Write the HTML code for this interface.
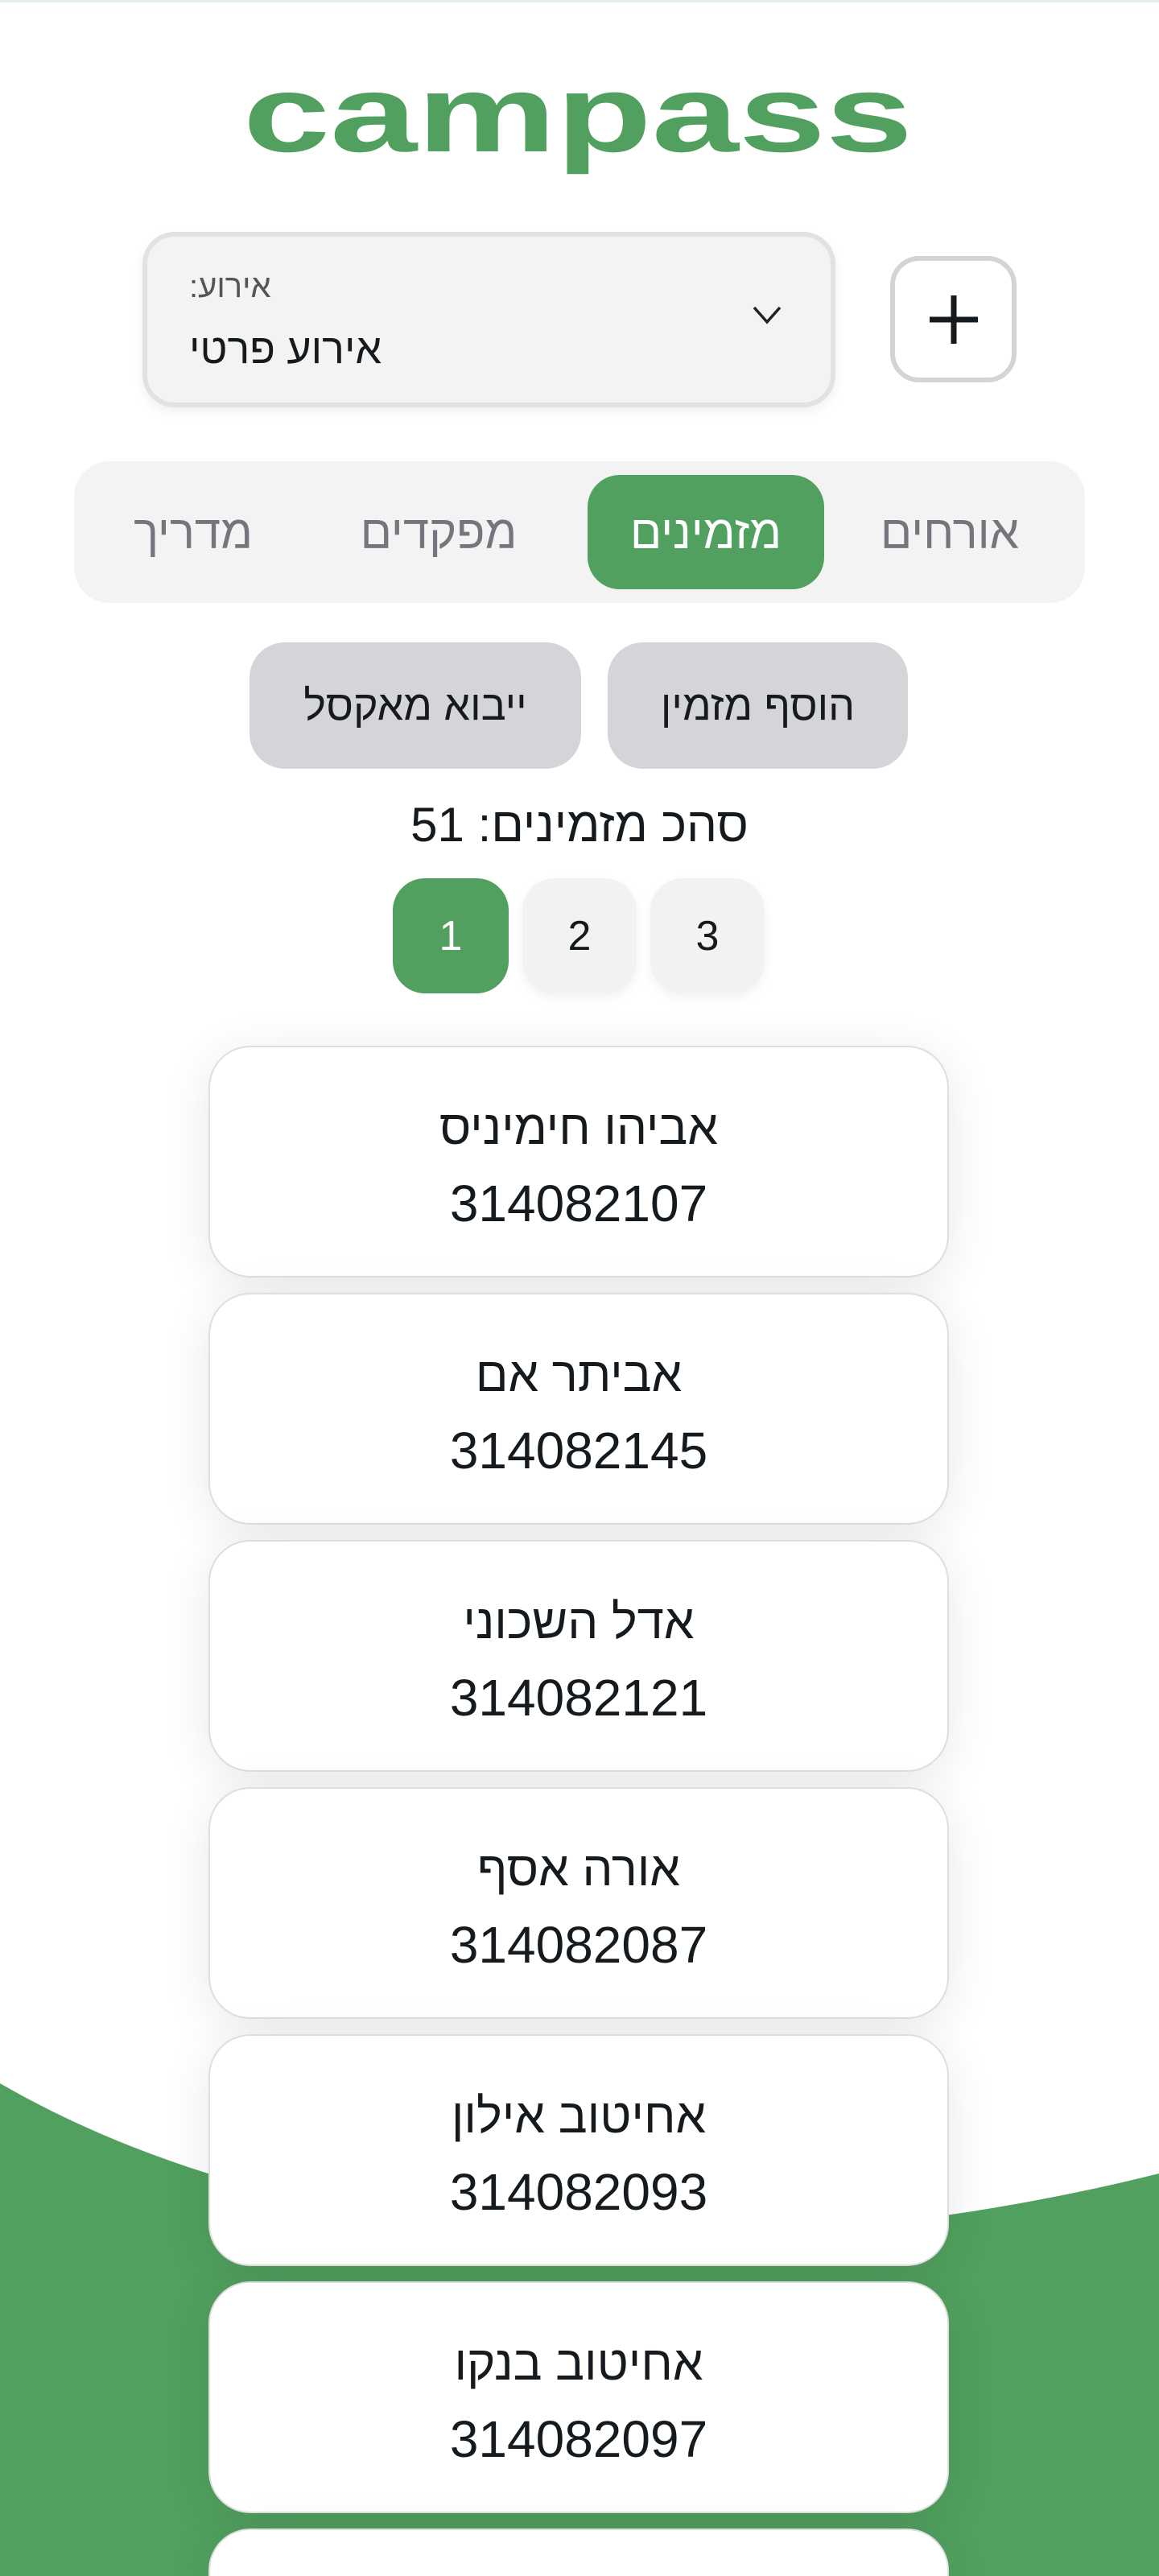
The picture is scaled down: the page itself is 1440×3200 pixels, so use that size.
<!DOCTYPE html>
<html style="overflow:hidden;height:3200px"><head><meta charset="utf-8"><style>
*{margin:0;padding:0;box-sizing:border-box}
html,body{width:1440px;height:3200px;overflow:hidden}
body{background:#fff;font-family:"Liberation Sans","DejaVu Sans",sans-serif;color:#141a1e;position:relative}
#w{position:absolute;left:0;top:0;width:1440px;height:3200px;overflow:hidden}
.a{position:absolute}
.c{display:flex;align-items:center;justify-content:center}
.card{position:absolute;left:259px;width:920px;height:288px;background:#fff;border:2px solid #dedede;border-radius:52px;box-shadow:0 10px 60px rgba(0,0,0,.09);text-align:center;direction:rtl}
.card .n{position:absolute;left:0;right:0;top:62px;font-size:60px;line-height:76px}
.card .i{position:absolute;left:0;right:0;top:156px;font-size:64px;line-height:76px}
</style></head><body><div id="w">
<div class="a" style="left:0;top:0;width:1440px;height:3px;background:#e3eee5"></div>
<svg class="a" style="left:0;top:0" width="1440" height="3200">
<path d="M0 2588 C 420 2830, 1000 2810, 1440 2700 L1440 3200 L0 3200 Z" fill="#51a05f"/>
<text x="302" y="188" font-family="Liberation Sans" font-weight="bold" font-size="136" fill="#51a05f" textLength="832" lengthAdjust="spacingAndGlyphs">campass</text>
</svg>
<div class="a" style="left:177px;top:288px;width:861px;height:218px;background:#f3f3f3;border:6px solid #e2e2e4;border-radius:40px;box-shadow:0 6px 14px rgba(0,0,0,.06)">
<div class="a" style="left:52px;top:40px;font-size:40px;color:#555;white-space:nowrap;direction:rtl">אירוע:</div>
<div class="a" style="left:52px;top:110px;font-size:52px;white-space:nowrap;direction:rtl">אירוע פרטי</div>
<svg class="a" style="left:750px;top:82px" width="40" height="30"><path d="M4 6 L20 24 L36 6" stroke="#222" stroke-width="3.5" fill="none"/></svg>
</div>
<div class="a c" style="left:1106px;top:318px;width:157px;height:157px;border:6px solid #d4d4d8;border-radius:36px;background:#fff">
<svg width="70" height="70"><path d="M35 5 V65 M5 35 H65" stroke="#141a1e" stroke-width="7"/></svg>
</div>
<div class="a" style="left:92px;top:573px;width:1256px;height:176px;background:#f3f3f3;border-radius:44px"></div>
<div class="a c" style="left:730px;top:590px;width:294px;height:142px;background:#51a05f;border-radius:40px;color:#fff;font-size:58px">מזמינים</div>
<div class="a c" style="left:1070px;top:590px;width:220px;height:142px;color:#76757d;font-size:58px">אורחים</div>
<div class="a c" style="left:410px;top:590px;width:270px;height:142px;color:#76757d;font-size:58px">מפקדים</div>
<div class="a c" style="left:120px;top:590px;width:240px;height:142px;color:#76757d;font-size:58px">מדריך</div>
<div class="a c" style="left:755px;top:798px;width:373px;height:157px;background:#d4d4d9;border-radius:44px;font-size:52px">הוסף מזמין</div>
<div class="a c" style="left:310px;top:798px;width:412px;height:157px;background:#d4d4d9;border-radius:44px;font-size:52px">ייבוא מאקסל</div>
<div class="a c" style="left:0;top:988px;width:1440px;height:72px;font-size:60px;direction:rtl">סהכ מזמינים: 51</div>
<div class="a c" style="left:488px;top:1091px;width:144px;height:143px;background:#51a05f;border-radius:40px;color:#fff;font-size:52px">1</div>
<div class="a c" style="left:649px;top:1091px;width:142px;height:143px;background:#f2f2f2;border-radius:40px;font-size:52px;box-shadow:0 6px 14px rgba(0,0,0,.05)">2</div>
<div class="a c" style="left:808px;top:1091px;width:142px;height:143px;background:#f2f2f2;border-radius:40px;font-size:52px;box-shadow:0 6px 14px rgba(0,0,0,.05)">3</div>
<div class="card" style="top:1299px"><div class="n">אביהו חימיניס</div><div class="i">314082107</div></div>
<div class="card" style="top:1606px"><div class="n">אביתר אם</div><div class="i">314082145</div></div>
<div class="card" style="top:1913px"><div class="n">אדל השכוני</div><div class="i">314082121</div></div>
<div class="card" style="top:2220px"><div class="n">אורה אסף</div><div class="i">314082087</div></div>
<div class="card" style="top:2527px"><div class="n">אחיטוב אילון</div><div class="i">314082093</div></div>
<div class="card" style="top:2834px"><div class="n">אחיטוב בנקו</div><div class="i">314082097</div></div>
<div class="card" style="top:3141px;height:59px;border-bottom:none;border-radius:52px 52px 0 0"></div>
</div></body></html>
